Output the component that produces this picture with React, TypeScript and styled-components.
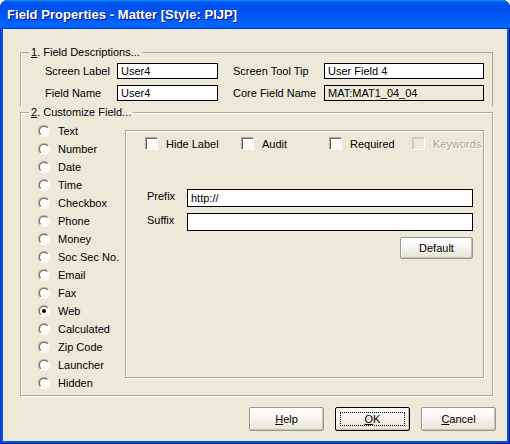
import React from "react";
import styled, { createGlobalStyle, css } from "styled-components";

const GlobalStyle = createGlobalStyle`
  html, body {
    margin: 0;
    padding: 0;
    background: #ffffff;
  }
  * {
    box-sizing: border-box;
  }
`;

const radioOptions = [
  "Text",
  "Number",
  "Date",
  "Time",
  "Checkbox",
  "Phone",
  "Money",
  "Soc Sec No.",
  "Email",
  "Fax",
  "Web",
  "Calculated",
  "Zip Code",
  "Launcher",
  "Hidden",
];

const App: React.FC = () => {
  return (
    <>
      <GlobalStyle />
      <Window>
        <TitleBar>
          <Title>Field Properties - Matter [Style: PIJP]</Title>
        </TitleBar>
        <Client>
          <TopGroup>
            <Legend>
              <u>1</u>. Field Descriptions...
            </Legend>
            <FieldGrid>
              <FieldLabel>Screen Label</FieldLabel>
              <TextBox defaultValue="User4" />
              <FieldLabel $indent>Screen Tool Tip</FieldLabel>
              <TextBox defaultValue="User Field 4" />
              <FieldLabel>Field Name</FieldLabel>
              <TextBox defaultValue="User4" />
              <FieldLabel $indent>Core Field Name</FieldLabel>
              <TextBox defaultValue="MAT:MAT1_04_04" $disabled readOnly />
            </FieldGrid>
          </TopGroup>

          <BottomGroup>
            <Legend>
              <u>2</u>. Customize Field...
            </Legend>
            <CustomizeBody>
              <RadioList>
                {radioOptions.map((opt) => (
                  <RadioRow key={opt}>
                    <RadioIcon checked={opt === "Web"} />
                    <span>{opt}</span>
                  </RadioRow>
                ))}
              </RadioList>

              <Panel>
                <CheckRow>
                  <CheckItem $w={96}>
                    <CheckBox />
                    Hide Label
                  </CheckItem>
                  <CheckItem $w={88}>
                    <CheckBox />
                    Audit
                  </CheckItem>
                  <CheckItem $w={83}>
                    <CheckBox />
                    Required
                  </CheckItem>
                  <CheckItem $disabled>
                    <CheckBox $disabled />
                    Keywords
                  </CheckItem>
                </CheckRow>

                <FormBlock>
                  <FormRow>
                    <FormLabel>Prefix</FormLabel>
                    <WideBox defaultValue="http://" />
                  </FormRow>
                  <FormRow>
                    <FormLabel>Suffix</FormLabel>
                    <WideBox defaultValue="" />
                  </FormRow>
                  <DefaultRow>
                    <Button $small>Default</Button>
                  </DefaultRow>
                </FormBlock>
              </Panel>
            </CustomizeBody>
          </BottomGroup>

          <ButtonRow>
            <Button>
              <u>H</u>elp
            </Button>
            <Button $default>
              <FocusRing>
                <u>O</u>K
              </FocusRing>
            </Button>
            <Button>
              <u>C</u>ancel
            </Button>
          </ButtonRow>
        </Client>
      </Window>
    </>
  );
};

const RadioIcon: React.FC<{ checked?: boolean }> = ({ checked }) => (
  <svg width="12" height="12" viewBox="0 0 12 12">
    <defs>
      <linearGradient id="rOuter" x1="0" y1="0" x2="1" y2="1">
        <stop offset="50%" stopColor="#ACA899" />
        <stop offset="50%" stopColor="#FFFFFF" />
      </linearGradient>
      <linearGradient id="rInner" x1="0" y1="0" x2="1" y2="1">
        <stop offset="50%" stopColor="#716F64" />
        <stop offset="50%" stopColor="#F1EFE2" />
      </linearGradient>
    </defs>
    <circle cx="6" cy="6" r="6" fill="url(#rOuter)" />
    <circle cx="6" cy="6" r="5" fill="url(#rInner)" />
    <circle cx="6" cy="6" r="4" fill="#FFFFFF" />
    {checked && <circle cx="6" cy="6" r="2" fill="#000000" />}
  </svg>
);

const Window = styled.div`
  width: 510px;
  height: 444px;
  display: flex;
  flex-direction: column;
  background: #0055e5;
  border-radius: 8px 8px 0 0;
  overflow: hidden;
  box-shadow: inset 1px 0 #0831d9, inset -1px 0 #00138c, inset 0 -1px #00138c;
  font-family: "Liberation Sans", Arial, sans-serif;
  font-size: 11px;
  color: #000;
`;

const TitleBar = styled.div`
  height: 29px;
  flex: none;
  display: flex;
  align-items: center;
  padding: 0 0 1px 7px;
  background: linear-gradient(
    180deg,
    #0997ff,
    #0053ee 8%,
    #0050ee 40%,
    #0066ff 88%,
    #0066ff 93%,
    #005bff 95%,
    #003dd7 96%,
    #003dd7
  );
`;

const Title = styled.span`
  font-weight: bold;
  font-size: 13px;
  color: #fff;
  text-shadow: 1px 1px #0f1089;
  letter-spacing: 0.05px;
`;

const Client = styled.div`
  flex: 1;
  margin: 0 3px 3px 3px;
  background: #ece9d8;
  display: flex;
  flex-direction: column;
`;

const etched = css`
  border: 1px solid #aca899;
  box-shadow: inset 1px 1px #fff, 1px 1px #fff;
`;

const Group = styled.fieldset`
  ${etched};
  margin: 0 14px 0 17px;
  padding: 0;
  min-width: 0;
`;

const TopGroup = styled(Group)`
  margin-top: 17px;
  border-bottom: none;
  box-shadow: inset 1px 0 #fff;
  padding-bottom: 5px;
`;

const BottomGroup = styled(Group)`
  padding-bottom: 3px;
`;

const Legend = styled.legend`
  margin-left: 8px;
  padding: 0 2px;
  line-height: 13px;
  font-size: 11px;
`;

const FieldGrid = styled.div`
  display: grid;
  grid-template-columns: 72px 101px 106px 160px;
  row-gap: 6px;
  grid-auto-rows: 16px;
  margin-top: 4px;
  padding-left: 24px;
`;

const FieldLabel = styled.span<{ $indent?: boolean }>`
  display: flex;
  align-items: center;
  white-space: nowrap;
  padding-left: ${(p) => (p.$indent ? "15px" : "0")};
`;

const TextBox = styled.input<{ $disabled?: boolean }>`
  width: 100%;
  height: 100%;
  margin: 0;
  border: 1px solid #000;
  padding: 0 3px;
  background: ${(p) => (p.$disabled ? "#ece9d8" : "#fff")};
  font-family: inherit;
  font-size: 11px;
  color: #000;
  outline: none;
`;

const CustomizeBody = styled.div`
  display: flex;
  align-items: flex-start;
  padding-top: 3px;
`;

const RadioList = styled.div`
  width: 104px;
  flex: none;
  padding-left: 17px;
  display: flex;
  flex-direction: column;
`;

const RadioRow = styled.div`
  height: 18px;
  display: flex;
  align-items: center;
  gap: 8px;
  white-space: nowrap;

  svg {
    flex: none;
  }
`;

const Panel = styled.div`
  ${etched};
  width: 359px;
  height: 248px;
  margin-top: 8px;
  padding: 6px 10px 0 19px;
  display: flex;
  flex-direction: column;
`;

const CheckRow = styled.div`
  display: flex;
  align-items: center;
  height: 13px;
`;

const CheckItem = styled.label<{ $w?: number; $disabled?: boolean }>`
  display: flex;
  align-items: center;
  gap: 8px;
  white-space: nowrap;
  ${(p) => p.$w && `width: ${p.$w}px; flex: none;`}
  ${(p) =>
    p.$disabled &&
    css`
      color: #aca899;
      text-shadow: 1px 1px #fff;
    `}
`;

const CheckBox = styled.span<{ $disabled?: boolean }>`
  width: 13px;
  height: 13px;
  flex: none;
  background: ${(p) => (p.$disabled ? "#ece9d8" : "#fff")};
  border: 1px solid;
  border-color: ${(p) =>
    p.$disabled ? "#c9c6b6 #fff #fff #c9c6b6" : "#aca899 #fff #fff #aca899"};
  box-shadow: ${(p) =>
    p.$disabled
      ? "inset 1px 1px #d6d3c4"
      : "inset 1px 1px #716f64, inset -1px -1px #f1efe2"};
`;

const FormBlock = styled.div`
  margin-top: 39px;
  padding-left: 2px;
  display: flex;
  flex-direction: column;
  gap: 6px;
`;

const FormRow = styled.div`
  display: flex;
  align-items: flex-start;
  height: 18px;
`;

const FormLabel = styled.span`
  width: 40px;
  flex: none;
  padding-top: 1px;
  line-height: 13px;
`;

const WideBox = styled(TextBox)`
  width: 286px;
  height: 18px;
`;

const DefaultRow = styled.div`
  display: flex;
  justify-content: flex-end;
  width: 326px;
`;

const ButtonRow = styled.div`
  display: flex;
  justify-content: flex-end;
  gap: 11px;
  margin-top: 11px;
  padding-right: 11px;
`;

const Button = styled.button<{ $default?: boolean; $small?: boolean }>`
  width: ${(p) => (p.$small ? "73px" : "75px")};
  height: ${(p) => (p.$small ? "22px" : "24px")};
  margin: 0;
  padding: 0;
  display: flex;
  align-items: center;
  justify-content: center;
  font-family: inherit;
  font-size: 11px;
  color: #000;
  border: 1px solid ${(p) => (p.$default ? "#000" : "#9a9888")};
  border-radius: 2px;
  background: linear-gradient(180deg, #ffffff 0%, #f4f3ee 50%, #e6e3d3 100%);
  box-shadow: inset -1px -1px #c5c2b2, inset 1px 1px #fff;
  cursor: default;
`;

const FocusRing = styled.span`
  display: flex;
  align-items: center;
  justify-content: center;
  width: calc(100% - 8px);
  height: calc(100% - 8px);
  border: 1px dotted #000;
`;

export default App;
